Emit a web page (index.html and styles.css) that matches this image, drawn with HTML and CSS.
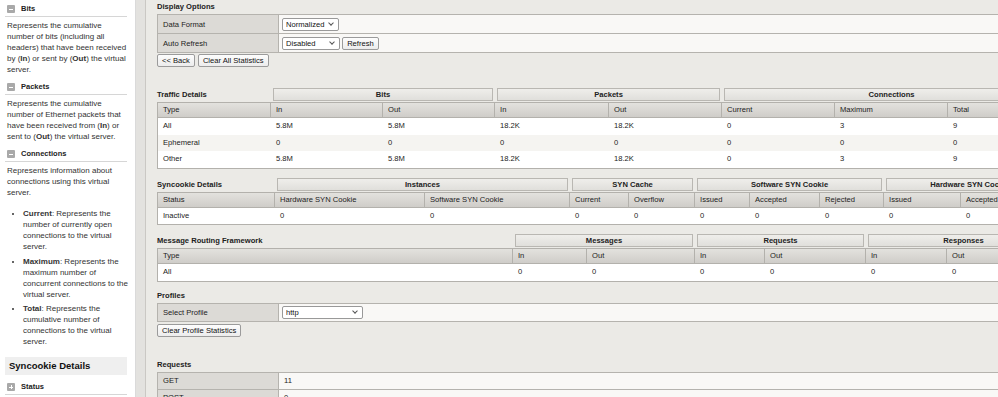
FILE: index.html
```html
<!DOCTYPE html>
<html lang="en">
	<head>
		<meta charset="utf-8">
		<title>Virtual Server Statistics</title>

		<link rel="stylesheet" href="styles.css">
	</head>

	<body>
		<div class="page">
			<!-- Help frame on the left -->
			<aside class="help">
				<h3 class="topic"><span class="toggle"></span>Bits</h3>
				<p>Represents the cumulative number of bits (including all headers) that have been received by (<b>In</b>) or sent by (<b>Out</b>) the virtual server.</p>

				<h3 class="topic"><span class="toggle"></span>Packets</h3>
				<p>Represents the cumulative number of Ethernet packets that have been received from (<b>In</b>) or sent to (<b>Out</b>) the virtual server.</p>

				<h3 class="topic"><span class="toggle"></span>Connections</h3>
				<p>Represents information about connections using this virtual server.</p>
				<ul>
					<li><b>Current</b>: Represents the number of currently open connections to the virtual server.</li>
					<li><b>Maximum</b>: Represents the maximum number of concurrent connections to the virtual server.</li>
					<li><b>Total</b>: Represents the cumulative number of connections to the virtual server.</li>
				</ul>

				<h2 class="section">Syncookie Details</h2>
				<h3 class="topic"><span class="toggle toggle--closed"></span>Status</h3>
			</aside>

			<div class="gutter"></div>

			<main class="content">
				<h2 class="title">Display Options</h2>
				<table class="form">
					<tr>
						<th>Data Format</th>
						<td>
							<span class="select select--format"><select><option>Normalized</option></select></span>
						</td>
					</tr>
					<tr>
						<th>Auto Refresh</th>
						<td>
							<span class="select select--refresh"><select><option>Disabled</option></select></span>
							<button class="btn">Refresh</button>
						</td>
					</tr>
				</table>
				<div class="actions">
					<button class="btn">&lt;&lt; Back</button>
					<button class="btn">Clear All Statistics</button>
				</div>

				<table class="stats traffic">
					<colgroup><col><col><col><col><col><col><col><col></colgroup>
					<thead>
						<tr class="groups">
							<th class="caption">Traffic Details</th>
							<th colspan="2"><span>Bits</span></th>
							<th colspan="2"><span>Packets</span></th>
							<th colspan="3"><span>Connections</span></th>
						</tr>
						<tr class="cols">
							<th>Type</th><th>In</th><th>Out</th><th>In</th><th>Out</th><th>Current</th><th>Maximum</th><th>Total</th>
						</tr>
					</thead>
					<tbody>
						<tr><td>All</td><td>5.8M</td><td>5.8M</td><td>18.2K</td><td>18.2K</td><td>0</td><td>3</td><td>9</td></tr>
						<tr><td>Ephemeral</td><td>0</td><td>0</td><td>0</td><td>0</td><td>0</td><td>0</td><td>0</td></tr>
						<tr><td>Other</td><td>5.8M</td><td>5.8M</td><td>18.2K</td><td>18.2K</td><td>0</td><td>3</td><td>9</td></tr>
					</tbody>
				</table>

				<table class="stats syncookie">
					<colgroup><col><col><col><col><col><col><col><col><col><col><col></colgroup>
					<thead>
						<tr class="groups">
							<th class="caption">Syncookie Details</th>
							<th colspan="2"><span>Instances</span></th>
							<th colspan="2"><span>SYN Cache</span></th>
							<th colspan="3"><span>Software SYN Cookie</span></th>
							<th colspan="3"><span>Hardware SYN Cookie</span></th>
						</tr>
						<tr class="cols">
							<th>Status</th><th>Hardware SYN Cookie</th><th>Software SYN Cookie</th><th>Current</th><th>Overflow</th><th>Issued</th><th>Accepted</th><th>Rejected</th><th>Issued</th><th>Accepted</th><th>Rejected</th>
						</tr>
					</thead>
					<tbody>
						<tr><td>Inactive</td><td>0</td><td>0</td><td>0</td><td>0</td><td>0</td><td>0</td><td>0</td><td>0</td><td>0</td><td>0</td></tr>
					</tbody>
				</table>

				<table class="stats routing">
					<colgroup><col><col><col><col><col><col><col></colgroup>
					<thead>
						<tr class="groups">
							<th class="caption">Message Routing Framework</th>
							<th colspan="2"><span>Messages</span></th>
							<th colspan="2"><span>Requests</span></th>
							<th colspan="2"><span>Responses</span></th>
						</tr>
						<tr class="cols">
							<th>Type</th><th>In</th><th>Out</th><th>In</th><th>Out</th><th>In</th><th>Out</th>
						</tr>
					</thead>
					<tbody>
						<tr><td>All</td><td>0</td><td>0</td><td>0</td><td>0</td><td>0</td><td>0</td></tr>
					</tbody>
				</table>

				<h2 class="title title--spaced">Profiles</h2>
				<table class="form form--short">
					<tr>
						<th>Select Profile</th>
						<td>
							<span class="select select--profile"><select><option>http</option></select></span>
						</td>
					</tr>
				</table>
				<div class="actions actions--short">
					<button class="btn">Clear Profile Statistics</button>
				</div>

				<h2 class="title title--requests">Requests</h2>
				<table class="form form--values">
					<tr><th>GET</th><td>11</td></tr>
					<tr><th>POST</th><td>0</td></tr>
				</table>
			</main>
		</div>
	</body>
</html>
```

FILE: styles.css
```css
/* Base */
* {
	padding: 0;
	margin: 0;
	box-sizing: border-box;
}

body {
	font-family: 'Liberation Sans', Arial, Helvetica, sans-serif;
	color: #222;
	overflow: hidden;
}

.page {
	display: flex;
	height: 397px;
}

/* Help frame */
.help {
	flex: none;
	width: 136px;
	padding: 0 5px 0 5px;
	background: #fff;
	border-right: 1px solid #dadada;
	font-size: 8px;
	line-height: 11px;
	color: #333;
	overflow: hidden;
}

.help .topic {
	display: flex;
	align-items: center;
	margin-right: 3px;
	padding: 3px 0 1px 2px;
	border-bottom: 1px solid #d6d6d6;
	font-size: 7.5px;
	line-height: 12px;
	color: #222;
}

.help .toggle {
	position: relative;
	width: 8px;
	height: 8px;
	margin-right: 6px;
	border-radius: 1px;
	background: #a9a9a9;
}

/* Minus bar, the closed one also gets the vertical bar */
.help .toggle:before,
.help .toggle--closed:after {
	content: '';
	position: absolute;
	left: 2px;
	top: 3.5px;
	width: 4px;
	height: 1px;
	background: #fff;
}

.help .toggle--closed:after {
	left: 3.5px;
	top: 2px;
	width: 1px;
	height: 4px;
}

.help p {
	margin: 3px 0 3px;
	padding-left: 2px;
}

.help ul {
	margin: 10px 0 0;
	padding-left: 18px;
}

.help li {
	margin-bottom: 3.5px;
}

.help .section {
	margin: 10px 3px 0 0;
	padding: 3px 4px;
	background: #efefef;
	font-size: 9.5px;
	line-height: 12px;
	color: #111;
}

.help .section + .topic {
	margin-top: 3px;
}

/* Divider between the frames */
.gutter {
	flex: none;
	width: 10px;
	background: #e3e2df;
	border-right: 1px solid #cac8c4;
}

/* Statistics frame */
.content {
	flex: 1;
	min-width: 0;
	padding: 2px 0 0 11px;
	background: #ebeae6;
	font-size: 7.6px;
	overflow: hidden;
}

.title {
	font-size: 7.6px;
	line-height: 10px;
	margin-bottom: 2px;
}

.title--spaced {
	margin-top: 9px;
}

.title--requests {
	margin-top: 23px;
}

/* Label / value tables */
.form {
	width: 900px;
	border-collapse: collapse;
	table-layout: fixed;
}

.form th {
	width: 121px;
	height: 19px;
	padding: 0 5px;
	background: #dcdad6;
	border: 1px solid #b5b3ae;
	font-weight: normal;
	text-align: left;
}

.form td {
	height: 19px;
	padding: 0 3px;
	background: #f9f8f6;
	border: 1px solid #b5b3ae;
}

.form--short th,
.form--short td {
	height: 18px;
}

.form--values th,
.form--values td {
	height: 17px;
}

.form--values td {
	padding: 0 5px;
}

/* Selects with a small chevron */
.select {
	position: relative;
	display: inline-block;
	vertical-align: middle;
}

.select select {
	-webkit-appearance: none;
	        appearance: none;
	display: block;
	height: 13px;
	padding: 0 0 0 3px;
	border: 1px solid #999;
	border-radius: 2px;
	background: #fff;
	font-family: inherit;
	font-size: 7.6px;
	line-height: 11px;
	color: #111;
}

.select:after {
	content: '';
	position: absolute;
	right: 6px;
	top: 3px;
	width: 3px;
	height: 3px;
	border-right: 1px solid #555;
	border-bottom: 1px solid #555;
	transform: rotate(45deg);
	pointer-events: none;
}

.select--format select {
	width: 57px;
}

.select--refresh select {
	width: 58px;
}

.select--profile select {
	width: 81px;
}

/* Buttons */
.btn {
	height: 13px;
	padding: 0 4px;
	border: 1px solid #9b9b9b;
	border-radius: 2px;
	background: linear-gradient(#fdfdfd, #ececec);
	font-family: inherit;
	font-size: 7.6px;
	line-height: 11px;
	color: #111;
	vertical-align: middle;
}

.actions {
	display: flex;
	gap: 3px;
	margin-top: 1px;
}

.actions--short {
	margin-top: 2px;
}

/* Statistics tables with grouped headers */
.stats {
	margin-top: 9px;
	border-collapse: separate;
	border-spacing: 0;
	table-layout: fixed;
}

.stats.traffic {
	width: 904px;
	margin-top: 21px;
}

.stats.syncookie {
	width: 899px;
}

.stats.routing {
	width: 904px;
	margin-top: 9px;
}

.traffic col:nth-child(1) { width: 114px; }
.traffic col:nth-child(2),
.traffic col:nth-child(3) { width: 112px; }
.traffic col:nth-child(4) { width: 114px; }
.traffic col:nth-child(n+5) { width: 113px; }

.syncookie col:nth-child(1) { width: 118px; }
.syncookie col:nth-child(2) { width: 150px; }
.syncookie col:nth-child(3) { width: 145px; }
.syncookie col:nth-child(4) { width: 59px; }
.syncookie col:nth-child(5) { width: 66px; }
.syncookie col:nth-child(6) { width: 55px; }
.syncookie col:nth-child(7) { width: 70px; }
.syncookie col:nth-child(8) { width: 64px; }
.syncookie col:nth-child(9) { width: 77px; }
.syncookie col:nth-child(10) { width: 50px; }
.syncookie col:nth-child(11) { width: 45px; }

.routing col:nth-child(1) { width: 356px; }
.routing col:nth-child(2) { width: 74px; }
.routing col:nth-child(3) { width: 108px; }
.routing col:nth-child(4) { width: 70px; }
.routing col:nth-child(5) { width: 101px; }
.routing col:nth-child(6) { width: 81px; }
.routing col:nth-child(7) { width: 114px; }

.stats .groups th {
	padding: 0 0 1px;
	text-align: center;
	white-space: nowrap;
}

.stats .groups span {
	display: block;
	height: 13px;
	margin: 0 2px;
	border: 1px solid #b9b7b2;
	background: linear-gradient(#efeeeb, #e0dfdb);
	line-height: 11px;
	overflow: hidden;
}

.stats .groups .caption {
	text-align: left;
	vertical-align: middle;
}

.stats .cols th {
	padding: 0 5px;
	background: linear-gradient(#e3e2de, #cfcdc9);
	border-top: 1px solid #b3b1ac;
	border-bottom: 1px solid #b3b1ac;
	border-right: 1px solid #b3b1ac;
	font-weight: normal;
	text-align: left;
	line-height: 14px;
	white-space: nowrap;
	overflow: hidden;
}

.stats .cols th:first-child {
	border-left: 1px solid #b3b1ac;
}

.stats td {
	padding: 0 5px;
	background: #fff;
	line-height: 16.5px;
	white-space: nowrap;
}

.stats td:first-child {
	border-left: 1px solid #b3b1ac;
}

.stats tbody tr:nth-child(even) td {
	background: #f5f4f1;
}

.stats tbody tr:last-child td {
	border-bottom: 1px solid #b3b1ac;
}
```
